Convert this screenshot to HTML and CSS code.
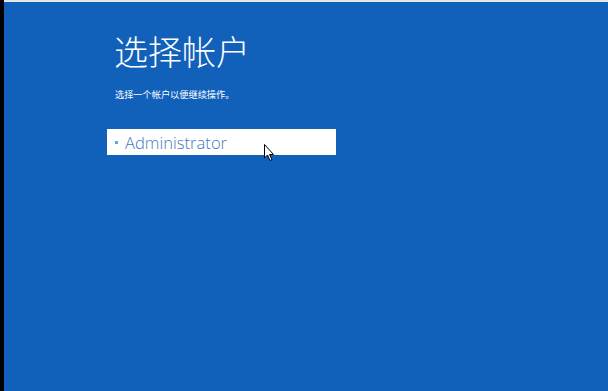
FILE: index.html
```html
<!DOCTYPE html>
<html>
<head>
	<title>选择帐户</title>
	<link rel="stylesheet" href="styles.css">
</head>
<body>
	<div class="screen">
		<div class="panel">
			<h1 class="title">选择帐户</h1>
			<p class="subtitle">选择一个帐户以便继续操作。</p>
			<div class="account-list">
				<div class="account">
					<span class="bullet"></span>
					<span class="account-name">Administrator</span>
				</div>
			</div>
		</div>
		<svg class="cursor" width="12" height="18" viewBox="0 0 12 18">
			<path d="M0.5 0.5 L0.5 14 L3.5 11 L6 16.5 L8 15.5 L5.5 10.5 L9.5 10.5 Z" fill="#fff" stroke="#000" stroke-width="1"/>
		</svg>
	</div>
</body>
</html>
```

FILE: styles.css
```css
:root {
  --screen-blue: #1161bb;
  --account-blue: #4679bd;
}

html, body {
  margin: 0;
  height: 100%;
}

body {
  background-color: #000;
  font-family: "Noto Sans CJK SC", "Noto Sans", sans-serif;
}

.screen {
  position: relative;
  height: 100%;
  box-sizing: border-box;
  margin-left: 4px;
  border-top: 2px solid #e6e6e6;
  background-color: var(--screen-blue);
}

.panel {
  display: flex;
  flex-direction: column;
  padding: 29px 0 0 103px;
}

.title {
  margin: 0 0 0 7px;
  font-size: 34px;
  font-weight: 300;
  line-height: 40px;
  color: #fff;
}

.subtitle {
  margin: 17px 0 0 8px;
  font-size: 9.2px;
  line-height: 12px;
  color: #fff;
}

.account-list {
  margin-top: 29px;
}

.account {
  display: flex;
  align-items: center;
  width: 229px;
  height: 26px;
  background-color: #fff;
}

.bullet {
  width: 3px;
  height: 3px;
  margin: 0 7px 0 8px;
  background-color: #5aa7de;
}

.account-name {
  font-family: "Open Sans", "Noto Sans", sans-serif;
  font-size: 16.6px;
  font-weight: 300;
  color: var(--account-blue);
}

.cursor {
  position: absolute;
  left: 260px;
  top: 142px;
}
```
